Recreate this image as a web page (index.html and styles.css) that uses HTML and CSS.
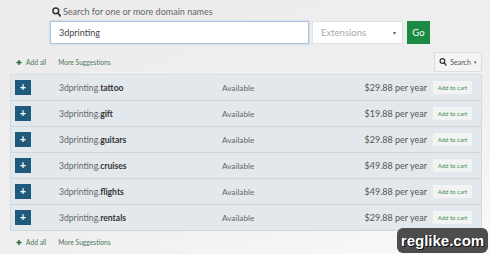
FILE: index.html
```html
<!DOCTYPE html>
<html lang="en">
<head>
    <meta charset="UTF-8">
    <title>Domain Search</title>
    <link rel="stylesheet" href="styles.css">
</head>
<body>
    <div class="page">
        <div class="search-box">
            <label class="search-label" for="domain">
                <svg class="search-icon" width="9" height="10" viewBox="0 0 9 10"><circle cx="3.8" cy="3.8" r="2.9" fill="none" stroke="#333" stroke-width="1.5"/><path d="M5.9 6l2.4 2.9" stroke="#333" stroke-width="1.7" stroke-linecap="round"/></svg>
                Search for one or more domain names
            </label>
            <div class="search-row">
                <input type="text" id="domain" class="domain-input" value="3dprinting">
                <div class="ext-select">Extensions <span class="caret">&#9662;</span></div>
                <button class="go-btn">Go</button>
            </div>
        </div>

        <div class="toolbar">
            <a class="link add-all"><span class="plus-icon">&#10010;</span> Add all</a>
            <a class="link">More Suggestions</a>
            <button class="search-btn">
                <svg width="8" height="8" viewBox="0 0 9 10"><circle cx="3.8" cy="3.8" r="2.9" fill="none" stroke="#333" stroke-width="1.5"/><path d="M5.9 6l2.4 2.9" stroke="#333" stroke-width="1.7" stroke-linecap="round"/></svg>
                Search <span class="caret-sm">&#9662;</span>
            </button>
        </div>

        <div class="results">
            <div class="result-row">
                <button class="add-btn">+</button>
                <div class="domain">3dprinting.<b>tattoo</b></div>
                <div class="status">Available</div>
                <div class="price">$29.88 per year</div>
                <button class="cart-btn">Add to cart</button>
            </div>
            <div class="result-row">
                <button class="add-btn">+</button>
                <div class="domain">3dprinting.<b>gift</b></div>
                <div class="status">Available</div>
                <div class="price">$19.88 per year</div>
                <button class="cart-btn">Add to cart</button>
            </div>
            <div class="result-row">
                <button class="add-btn">+</button>
                <div class="domain">3dprinting.<b>guitars</b></div>
                <div class="status">Available</div>
                <div class="price">$29.88 per year</div>
                <button class="cart-btn">Add to cart</button>
            </div>
            <div class="result-row">
                <button class="add-btn">+</button>
                <div class="domain">3dprinting.<b>cruises</b></div>
                <div class="status">Available</div>
                <div class="price">$49.88 per year</div>
                <button class="cart-btn">Add to cart</button>
            </div>
            <div class="result-row">
                <button class="add-btn">+</button>
                <div class="domain">3dprinting.<b>flights</b></div>
                <div class="status">Available</div>
                <div class="price">$49.88 per year</div>
                <button class="cart-btn">Add to cart</button>
            </div>
            <div class="result-row">
                <button class="add-btn">+</button>
                <div class="domain">3dprinting.<b>rentals</b></div>
                <div class="status">Available</div>
                <div class="price">$29.88 per year</div>
                <button class="cart-btn">Add to cart</button>
            </div>
        </div>

        <div class="toolbar bottom">
            <a class="link add-all"><span class="plus-icon">&#10010;</span> Add all</a>
            <a class="link">More Suggestions</a>
        </div>
    </div>

    <div class="watermark">reglike.com</div>
</body>
</html>
```

FILE: styles.css
```css
body { margin: 0; font-family: Lato, "Open Sans", Arial, sans-serif; background: linear-gradient(160deg, #ececec 0%, #efefef 60%, #fafafa 100%); height: 254px; overflow: hidden; color: #555; }
.page { padding: 5px 8px 0 10px; }

.search-box { margin-left: 40px; }
.search-label { display: flex; align-items: center; gap: 2px; font-size: 9px; color: #666; height: 13px; margin-left: 2px; }
.search-icon { margin-top: 1px; }
.search-row { display: flex; margin-top: 3px; height: 23px; }
.domain-input { box-sizing: border-box; width: 259px; height: 23px; border: 1px solid #a9c4dc; box-shadow: 0 0 2px rgba(100, 150, 200, 0.4); padding: 0 8px; font: 9px Lato, Arial, sans-serif; color: #444; background: #fff; outline: none; }
.ext-select { box-sizing: border-box; width: 91px; height: 23px; margin-left: 3px; background: #fff; border: 1px solid #e2e2e2; color: #aaa; font-size: 9.5px; display: flex; align-items: center; padding: 0 6px 0 8px; justify-content: space-between; }
.caret { font-size: 6px; color: #666; }
.go-btn { width: 23px; height: 23px; margin-left: 4px; border: none; background: #1b8a42; color: #fff; font: 9.5px Lato, Arial, sans-serif; padding: 0; }

.toolbar { display: flex; align-items: center; height: 20px; margin-top: 8px; padding-left: 6px; gap: 12px; }
.link { font-size: 6.7px; color: #4f7a5c; }
.add-all { display: flex; align-items: center; gap: 4px; }
.plus-icon { font-size: 7px; color: #1f6b34; }
.search-btn { margin-left: auto; box-sizing: border-box; width: 48px; height: 20px; border: 1px solid #ddd; background: #f4f4f4; font: 7px Lato, Arial, sans-serif; color: #555; display: flex; align-items: center; justify-content: center; gap: 3px; padding: 0; }
.caret-sm { font-size: 5px; }

.results { margin-top: 2px; width: 472px; border-top: 1px solid #d6dde2; }
.result-row { display: flex; align-items: center; height: 25px; background: #e3e8ec; border: 1px solid #d3dae0; border-top: none; border-bottom: 1px solid #cfd6dc; }
.add-btn { width: 16px; height: 15px; margin-left: 4px; border: none; padding: 0; background: #1d5a7c; color: #fff; font: bold 10px Arial, sans-serif; line-height: 15px; }
.domain { width: 163px; margin-left: 28px; font-size: 8.6px; color: #666; }
.domain b { color: #333; }
.status { width: 110px; font-size: 8.2px; color: #666; }
.price { width: 95px; text-align: right; font-size: 9px; color: #555; }
.cart-btn { margin-left: 6px; width: 39px; height: 13px; padding: 0; border: none; background: #f2f4f4; color: #3d8a51; font: 6px Lato, Arial, sans-serif; }

.toolbar.bottom { margin-top: 3px; height: 16px; }

.watermark { position: absolute; right: 2px; bottom: 1px; width: 91px; height: 25px; border-radius: 6px; background: #4d4d4d; color: #fff; font: bold 15px "Liberation Sans", Arial, sans-serif; display: flex; align-items: center; justify-content: center; text-shadow: 1px 1px 0 #111, -1px 0 0 #222; }
```
